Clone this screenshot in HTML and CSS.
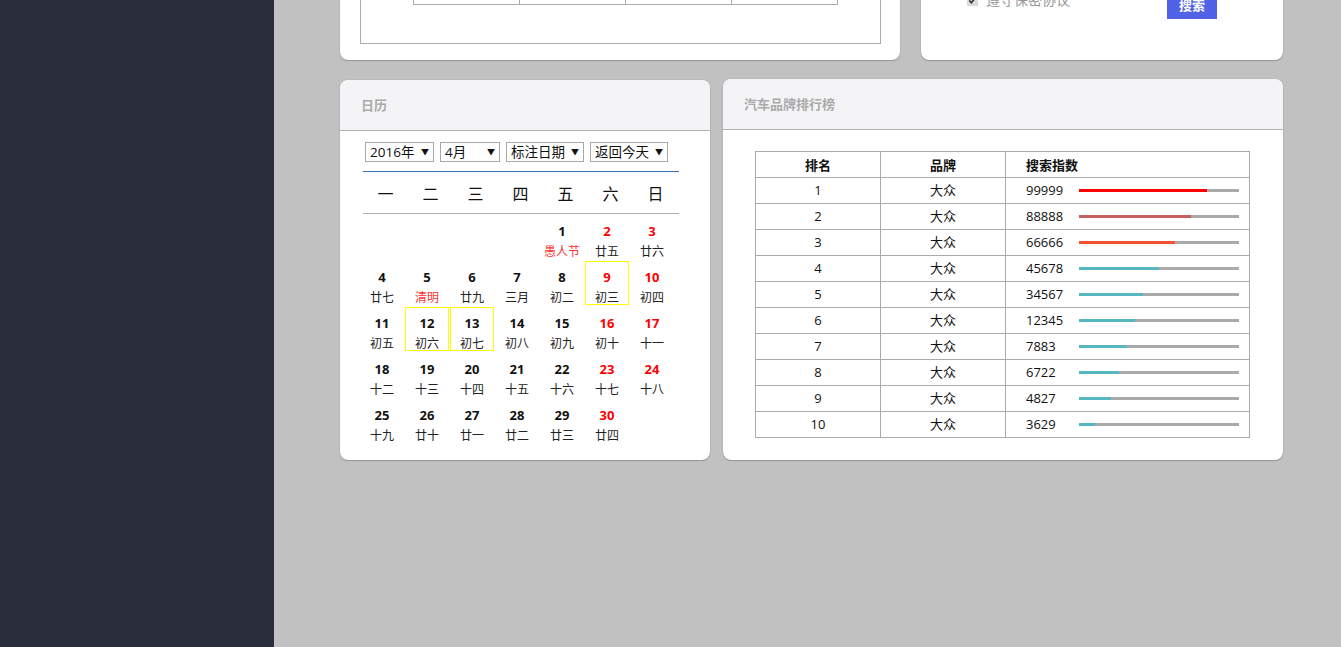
FILE: index.html
```html
<!DOCTYPE html>
<html lang="zh">
<head>
<meta charset="utf-8">
<title>Dashboard</title>
<link rel="stylesheet" href="styles.css">
</head>
<body>
<div class="app">
  <aside class="sidebar"></aside>
  <main class="main">
    <div class="row row-top">
      <section class="card card-form-table">
        <div class="inner-box">
          <table class="grid-table">
            <tr><td></td><td></td><td></td><td></td></tr>
            <tr><td></td><td></td><td></td><td></td></tr>
          </table>
        </div>
      </section>
      <section class="card card-search">
        <div class="search-row">
          <label class="agree"><input type="checkbox" checked> <span>遵守保密协议</span></label>
          <button class="btn-search">搜索</button>
        </div>
      </section>
    </div>

    <div class="row row-bottom">
      <section class="card card-calendar">
        <header class="card-head">日历</header>
        <div class="cal-body">
          <div class="cal-controls">
            <span class="sel sel-year">2016年<i>▼</i></span>
            <span class="sel sel-month">4月<i>▼</i></span>
            <span class="sel sel-mark">标注日期<i>▼</i></span>
            <span class="sel sel-today">返回今天<i>▼</i></span>
          </div>
          <div class="cal-week">
            <span>一</span><span>二</span><span>三</span><span>四</span><span>五</span><span>六</span><span>日</span>
          </div>
          <div class="cal-days">
            <div class="day empty"></div>
            <div class="day empty"></div>
            <div class="day empty"></div>
            <div class="day empty"></div>
            <div class="day"><b>1</b><em class="fest">愚人节</em></div>
            <div class="day wk"><b>2</b><em>廿五</em></div>
            <div class="day wk"><b>3</b><em>廿六</em></div>

            <div class="day"><b>4</b><em>廿七</em></div>
            <div class="day"><b>5</b><em class="fest">清明</em></div>
            <div class="day"><b>6</b><em>廿九</em></div>
            <div class="day"><b>7</b><em>三月</em></div>
            <div class="day"><b>8</b><em>初二</em></div>
            <div class="day wk mark"><b>9</b><em>初三</em></div>
            <div class="day wk"><b>10</b><em>初四</em></div>

            <div class="day"><b>11</b><em>初五</em></div>
            <div class="day mark"><b>12</b><em>初六</em></div>
            <div class="day mark"><b>13</b><em>初七</em></div>
            <div class="day"><b>14</b><em>初八</em></div>
            <div class="day"><b>15</b><em>初九</em></div>
            <div class="day wk"><b>16</b><em>初十</em></div>
            <div class="day wk"><b>17</b><em>十一</em></div>

            <div class="day"><b>18</b><em>十二</em></div>
            <div class="day"><b>19</b><em>十三</em></div>
            <div class="day"><b>20</b><em>十四</em></div>
            <div class="day"><b>21</b><em>十五</em></div>
            <div class="day"><b>22</b><em>十六</em></div>
            <div class="day wk"><b>23</b><em>十七</em></div>
            <div class="day wk"><b>24</b><em>十八</em></div>

            <div class="day"><b>25</b><em>十九</em></div>
            <div class="day"><b>26</b><em>廿十</em></div>
            <div class="day"><b>27</b><em>廿一</em></div>
            <div class="day"><b>28</b><em>廿二</em></div>
            <div class="day"><b>29</b><em>廿三</em></div>
            <div class="day wk"><b>30</b><em>廿四</em></div>
          </div>
        </div>
      </section>

      <section class="card card-rank">
        <header class="card-head">汽车品牌排行榜</header>
        <div class="rank-body">
          <table class="rank-table">
            <thead>
              <tr><th class="c1"><div class="cell">排名</div></th><th class="c2"><div class="cell">品牌</div></th><th class="c3"><div class="cell">搜索指数</div></th></tr>
            </thead>
            <tbody>
              <tr><td><div class="cell">1</div></td><td><div class="cell">大众</div></td><td class="idx"><div class="cell"><span class="num">99999</span><span class="bar"><span class="fill red" style="width:80%"></span></span></div></td></tr>
              <tr><td><div class="cell">2</div></td><td><div class="cell">大众</div></td><td class="idx"><div class="cell"><span class="num">88888</span><span class="bar"><span class="fill rose" style="width:70%"></span></span></div></td></tr>
              <tr><td><div class="cell">3</div></td><td><div class="cell">大众</div></td><td class="idx"><div class="cell"><span class="num">66666</span><span class="bar"><span class="fill orange" style="width:60%"></span></span></div></td></tr>
              <tr><td><div class="cell">4</div></td><td><div class="cell">大众</div></td><td class="idx"><div class="cell"><span class="num">45678</span><span class="bar"><span class="fill teal" style="width:50%"></span></span></div></td></tr>
              <tr><td><div class="cell">5</div></td><td><div class="cell">大众</div></td><td class="idx"><div class="cell"><span class="num">34567</span><span class="bar"><span class="fill teal" style="width:40%"></span></span></div></td></tr>
              <tr><td><div class="cell">6</div></td><td><div class="cell">大众</div></td><td class="idx"><div class="cell"><span class="num">12345</span><span class="bar"><span class="fill teal" style="width:35%"></span></span></div></td></tr>
              <tr><td><div class="cell">7</div></td><td><div class="cell">大众</div></td><td class="idx"><div class="cell"><span class="num">7883</span><span class="bar"><span class="fill teal" style="width:30%"></span></span></div></td></tr>
              <tr><td><div class="cell">8</div></td><td><div class="cell">大众</div></td><td class="idx"><div class="cell"><span class="num">6722</span><span class="bar"><span class="fill teal" style="width:25%"></span></span></div></td></tr>
              <tr><td><div class="cell">9</div></td><td><div class="cell">大众</div></td><td class="idx"><div class="cell"><span class="num">4827</span><span class="bar"><span class="fill teal" style="width:20%"></span></span></div></td></tr>
              <tr><td><div class="cell">10</div></td><td><div class="cell">大众</div></td><td class="idx"><div class="cell"><span class="num">3629</span><span class="bar"><span class="fill teal" style="width:10%"></span></span></div></td></tr>
            </tbody>
          </table>
        </div>
      </section>
    </div>
  </main>
</div>
</body>
</html>
```

FILE: styles.css
```css
* { box-sizing: border-box; }
html, body { margin: 0; padding: 0; }
body {
  background: #c1c1c1;
  font-family: "Open Sans", "Noto Sans CJK SC", sans-serif;
  color: #222;
  overflow: hidden;
  height: 647px;
}
.app { display: flex; height: 647px; }
.sidebar { width: 274px; flex: none; background: #2a2d3c; height: 647px; }
.main { flex: 1; padding-left: 66px; margin-top: -100px; }

.row { display: flex; }
.row-top { gap: 21px; height: 160px; }
.row-bottom { gap: 13px; margin-top: 19px; }

.card {
  background: #fff;
  border-radius: 8px;
  box-shadow: 0 0 1px rgba(0,0,0,0.35), 0 1px 1px rgba(0,0,0,0.2);
  overflow: hidden;
}

/* top-left card */
.card-form-table {
  width: 560px; height: 160px;
  display: flex; flex-direction: column; justify-content: flex-end;
  padding: 0 19px 16px 20px;
}
.inner-box {
  border: 1px solid #aaa;
  height: 120px;
  display: flex; flex-direction: column; justify-content: flex-end;
  padding: 0 0 38px 52px;
}
.grid-table { border-collapse: collapse; width: 425px; }
.grid-table td { border: 1px solid #aaa; width: 106px; height: 30px; padding: 0; }

/* top-right card */
.card-search {
  width: 362px; height: 160px;
  display: flex; flex-direction: column; justify-content: flex-end;
  padding: 0 0 41px 46px;
}
.search-row { display: flex; align-items: flex-start; }
.agree {
  display: flex; align-items: center;
  width: 200px; margin-top: 3px;
  font-size: 14px; color: #999; line-height: 16px;
}
.agree input { margin: 0 8px 0 0; width: 11px; height: 11px; accent-color: #dcdcdc; }
.btn-search {
  width: 50px; height: 30px;
  border: 0; background: #5162e6; color: #fff;
  font-family: "Noto Sans CJK SC", sans-serif;
  font-size: 13px; font-weight: bold;
  padding: 0; margin: 0;
}

/* card header */
.card-head {
  height: 51px;
  background: #f4f4f6;
  border-bottom: 1px solid #b3b3b3;
  font-family: "Noto Sans CJK SC", sans-serif;
  font-size: 13px; font-weight: bold; color: #aaa;
  line-height: 50px;
  padding-left: 21px;
}

/* calendar */
.card-calendar { width: 370px; height: 380px; margin-top: 1px; }
.cal-body { padding: 11px 0 0 23px; }
.cal-controls { display: flex; gap: 6px; margin-left: 2px; }
.sel {
  display: flex; align-items: center; justify-content: space-between;
  height: 20px; border: 1px solid #a9a9a9;
  font-size: 13.5px; color: #111; line-height: 18px;
  padding: 0 4px 0 4px;
  font-family: "Open Sans", "Noto Sans CJK SC", sans-serif;
}
.sel i { font-style: normal; font-size: 8px; color: #111; }
.sel-year { width: 69px; }
.sel-month { width: 60px; }
.sel-mark { width: 78px; }
.sel-today { width: 78px; }

.cal-week {
  width: 316px;
  margin-top: 9px;
  border-top: 1px solid #3a6fb7;
  border-bottom: 1px solid #b0b0b0;
  height: 43px;
  display: grid; grid-template-columns: repeat(7, 45px);
  align-items: center;
  font-family: "Noto Sans CJK SC", sans-serif;
  font-size: 16px; color: #111;
}
.cal-week span { text-align: center; }

.cal-days {
  margin-left: -3px; margin-top: 1px;
  display: grid; grid-template-columns: repeat(7, 45px);
  grid-auto-rows: 46px;
}
.day {
  width: 44px; height: 44px;
  border: 1px solid transparent;
  display: flex; flex-direction: column; align-items: center;
  padding-top: 5px;
}
.day.mark { border-color: #ffff00; }
.day b {
  font-size: 13px; font-weight: bold; color: #111;
  line-height: 20px; height: 20px;
}
.day em {
  font-style: normal;
  font-family: "Noto Sans CJK SC", sans-serif;
  font-size: 12px; color: #222;
  line-height: 20px; height: 20px;
}
.day.wk b { color: #f00; }
.day em.fest { color: #f33; }

/* ranking */
.card-rank { width: 560px; height: 381px; }
.rank-body { padding: 21px 0 0 32px; }
.rank-table { border-collapse: collapse; width: 495px; font-size: 13px; color: #111; }
.rank-table th, .rank-table td {
  border: 1px solid #aaa;
  padding: 0;
  text-align: center;
}
.rank-table .cell {
  height: 25px; line-height: 25px;
  overflow: hidden;
}
.rank-table th { font-family: "Noto Sans CJK SC", sans-serif; font-weight: bold; }
.rank-table td { font-family: "Open Sans", "Noto Sans CJK SC", sans-serif; }
.rank-table .c1 { width: 125px; }
.rank-table .c2 { width: 125px; }
.rank-table .c3 { text-align: left; padding-left: 20px; }
.rank-table td.idx { text-align: left; padding-left: 20px; }
.idx .cell { display: flex; align-items: center; }
.idx .num { width: 53px; flex: none; }
.idx .bar {
  width: 160px; height: 3px; background: #aaa;
  flex: none;
}
.idx .fill { display: block; height: 3px; }
.fill.red { background: #ff0000; }
.fill.rose { background: #c85f5f; }
.fill.orange { background: #f35233; }
.fill.teal { background: #55b8c0; }
```
